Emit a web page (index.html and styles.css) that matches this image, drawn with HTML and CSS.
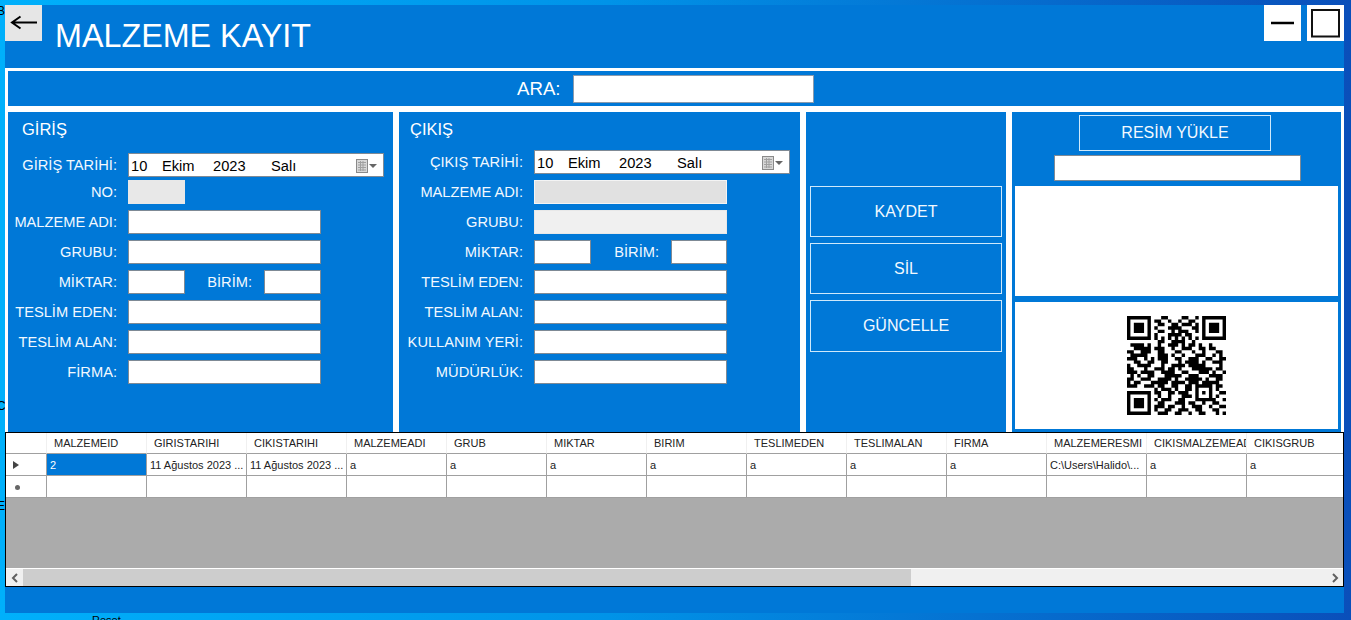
FILE: index.html
```html
<!DOCTYPE html>
<html lang="tr">
<head>
  <meta charset="UTF-8" />
  <meta name="viewport" content="width=device-width, initial-scale=1.0" />
  <title>Malzeme Kayit</title>
  <link rel="stylesheet" href="styles.css">
</head>
<body>
  <!-- bits of the window behind this one -->
  <span class="behind behind-b">B</span>
  <span class="behind behind-c">C</span>
  <span class="behind behind-e">E</span>
  <span class="behind behind-reset">Reset</span>

  <div class="window">
    <div class="header">
      <button class="icon-btn back-btn" aria-label="Geri">
        <svg width="37" height="36" viewBox="0 0 37 36"><path d="M32 17.5H6.500M15.500 11.500L7 17.500L15.500 23.500" fill="none" stroke="#000" stroke-width="2"/></svg>
      </button>
      <h1 class="title">MALZEME KAYIT</h1>
      <div class="window-btns">
        <button class="icon-btn" aria-label="Simge durumuna küçült">
          <svg width="37" height="36" viewBox="0 0 37 36"><path d="M7 18H30" stroke="#000" stroke-width="2.500"/></svg>
        </button>
        <button class="icon-btn" aria-label="Ekranı kapla">
          <svg width="37" height="36" viewBox="0 0 37 36"><rect x="5" y="5" width="27" height="26.500" fill="#fff" stroke="#111" stroke-width="2"/></svg>
        </button>
      </div>
    </div>

    <div class="content">
      <div class="search-bar">
        <label class="search-label">ARA:</label>
        <input class="search-input" type="text" />
      </div>

      <div class="panels">
        <section class="panel panel-giris">
          <h2 class="panel-title">GİRİŞ</h2>
          <div class="rows">
            <div class="row row-tight">
              <label>GİRİŞ TARİHİ:</label>
              <div class="date-box">
                <span class="d-day">10</span><span class="d-month">Ekim</span><span class="d-year">2023</span><span class="d-name">Salı</span>
                <svg class="cal-icon" width="22" height="14" viewBox="0 0 22 14"><rect x=".5" y=".5" width="11" height="13" fill="#d8d8d8" stroke="#8a8a8a"/><path d="M2 3.500h8M2 6h8M2 8.500h8M2 11h8M4.500 2v10M7 2v10" stroke="#a0a0a0"/><path d="M13 5h8l-4 4z" fill="#666"/></svg>
              </div>
            </div>
            <div class="row">
              <label>NO:</label>
              <input class="field field-small field-off" type="text" disabled />
            </div>
            <div class="row"><label>MALZEME ADI:</label><input class="field" type="text" /></div>
            <div class="row"><label>GRUBU:</label><input class="field" type="text" /></div>
            <div class="row">
              <label>MİKTAR:</label>
              <input class="field field-small" type="text" />
              <label class="unit-label">BİRİM:</label>
              <input class="field field-small" type="text" />
            </div>
            <div class="row"><label>TESLİM EDEN:</label><input class="field" type="text" /></div>
            <div class="row"><label>TESLİM ALAN:</label><input class="field" type="text" /></div>
            <div class="row"><label>FİRMA:</label><input class="field" type="text" /></div>
          </div>
        </section>

        <section class="panel panel-cikis">
          <h2 class="panel-title">ÇIKIŞ</h2>
          <div class="rows">
            <div class="row">
              <label>ÇIKIŞ TARİHİ:</label>
              <div class="date-box">
                <span class="d-day">10</span><span class="d-month">Ekim</span><span class="d-year">2023</span><span class="d-name">Salı</span>
                <svg class="cal-icon" width="22" height="14" viewBox="0 0 22 14"><rect x=".5" y=".5" width="11" height="13" fill="#d8d8d8" stroke="#8a8a8a"/><path d="M2 3.500h8M2 6h8M2 8.500h8M2 11h8M4.500 2v10M7 2v10" stroke="#a0a0a0"/><path d="M13 5h8l-4 4z" fill="#666"/></svg>
              </div>
            </div>
            <div class="row"><label>MALZEME ADI:</label><input class="field field-dark" type="text" disabled /></div>
            <div class="row"><label>GRUBU:</label><input class="field field-off" type="text" disabled /></div>
            <div class="row">
              <label>MİKTAR:</label>
              <input class="field field-small" type="text" />
              <label class="unit-label">BİRİM:</label>
              <input class="field field-small" type="text" />
            </div>
            <div class="row"><label>TESLİM EDEN:</label><input class="field" type="text" /></div>
            <div class="row"><label>TESLİM ALAN:</label><input class="field" type="text" /></div>
            <div class="row"><label>KULLANIM YERİ:</label><input class="field" type="text" /></div>
            <div class="row"><label>MÜDÜRLÜK:</label><input class="field" type="text" /></div>
          </div>
        </section>

        <section class="panel panel-actions">
          <button class="action-btn">KAYDET</button>
          <button class="action-btn">SİL</button>
          <button class="action-btn action-btn-last">GÜNCELLE</button>
        </section>

        <section class="panel panel-image">
          <button class="upload-btn">RESİM YÜKLE</button>
          <input class="path-input" type="text" />
          <div class="picture-box"></div>
          <div class="qr-box">
            <svg width="99" height="99" viewBox="0 0 29 29" shape-rendering="geometricPrecision">
              <path fill="none" stroke="#000" d="M0 .5h7M10 .5h2M16 .5h2M20 .5h1M22 .5h7M0 1.500h1M6 1.500h1M8 1.500h2M12 1.500h1M15 1.500h1M18 1.500h2M22 1.500h1M28 1.500h1M0 2.500h1M2 2.500h3M6 2.500h1M9 2.500h2M13 2.500h2M16 2.500h3M20 2.500h1M22 2.500h1M24 2.500h3M28 2.500h1M0 3.500h1M2 3.500h3M6 3.500h1M8 3.500h1M12 3.500h3M15 3.500h1M19 3.500h2M22 3.500h1M24 3.500h3M28 3.500h1M0 4.500h1M2 4.500h3M6 4.500h1M9 4.500h2M13 4.500h1M15 4.500h3M20 4.500h1M22 4.500h1M24 4.500h3M28 4.500h1M0 5.500h1M6 5.500h1M8 5.500h1M12 5.500h4M17 5.500h2M22 5.500h1M28 5.500h1M0 6.500h7M8 6.500h1M10 6.500h1M12 6.500h1M14 6.500h1M16 6.500h1M18 6.500h1M20 6.500h1M22 6.500h7M9 7.500h2M13 7.500h4M19 7.500h1M1 8.500h4M6 8.500h1M9 8.500h1M12 8.500h3M16 8.500h1M18 8.500h2M21 8.500h1M24 8.500h1M2 9.500h5M8 9.500h3M13 9.500h1M16 9.500h3M21 9.500h2M24 9.500h2M0 10.500h2M4 10.500h3M9 10.500h2M14 10.500h2M19 10.500h1M22 10.500h1M26 10.500h2M1 11.500h5M9 11.500h3M13 11.500h1M16 11.500h1M20 11.500h3M25 11.500h1M27 11.500h1M0 12.500h3M5 12.500h1M7 12.500h1M9 12.500h3M14 12.500h2M18 12.500h3M23 12.500h2M27 12.500h2M2 13.500h2M6 13.500h2M10 13.500h2M15 13.500h1M17 13.500h4M22 13.500h1M25 13.500h3M0 14.500h1M3 14.500h4M10 14.500h1M13 14.500h4M18 14.500h5M27 14.500h1M0 15.500h2M5 15.500h1M8 15.500h3M12 15.500h2M15 15.500h1M19 15.500h6M26 15.500h2M0 16.500h3M4 16.500h4M10 16.500h4M16 16.500h2M21 16.500h3M25 16.500h1M28 16.500h1M1 17.500h1M3 17.500h1M6 17.500h2M11 17.500h5M18 17.500h3M24 17.500h4M0 18.500h2M4 18.500h3M9 18.500h4M14 18.500h1M17 18.500h5M23 18.500h1M26 18.500h2M0 19.500h1M2 19.500h2M7 19.500h5M13 19.500h4M18 19.500h3M22 19.500h5M0 20.500h3M5 20.500h3M9 20.500h2M13 20.500h2M17 20.500h2M20 20.500h5M26 20.500h2M8 21.500h1M10 21.500h3M14 21.500h1M17 21.500h2M20 21.500h1M24 21.500h1M26 21.500h1M0 22.500h7M8 22.500h2M12 22.500h2M15 22.500h3M20 22.500h1M22 22.500h1M24 22.500h1M27 22.500h2M0 23.500h1M6 23.500h1M9 23.500h1M12 23.500h1M16 23.500h3M20 23.500h1M24 23.500h1M26 23.500h1M0 24.500h1M2 24.500h3M6 24.500h1M8 24.500h1M10 24.500h3M15 24.500h2M20 24.500h5M25 24.500h1M28 24.500h1M0 25.500h1M2 25.500h3M6 25.500h1M9 25.500h2M14 25.500h3M18 25.500h2M22 25.500h1M25 25.500h2M0 26.500h1M2 26.500h3M6 26.500h1M8 26.500h3M12 26.500h2M16 26.500h1M19 26.500h3M24 26.500h1M27 26.500h2M0 27.500h1M6 27.500h1M8 27.500h1M11 27.500h2M15 27.500h3M20 27.500h2M25 27.500h2M0 28.500h7M9 28.500h3M14 28.500h2M18 28.500h1M21 28.500h2M26 28.500h1M28 28.500h1"/>
            </svg>
          </div>
        </section>
      </div>
    </div>

    <div class="grid-view">
      <div class="grid-body">
        <table class="grid">
          <thead>
            <tr>
              <th class="row-head"></th>
              <th>MALZEMEID</th><th>GIRISTARIHI</th><th>CIKISTARIHI</th><th>MALZEMEADI</th><th>GRUB</th><th>MIKTAR</th><th>BIRIM</th><th>TESLIMEDEN</th><th>TESLIMALAN</th><th>FIRMA</th><th>MALZEMERESMI</th><th>CIKISMALZEMEADI</th><th>CIKISGRUB</th>
            </tr>
          </thead>
          <tbody>
            <tr>
              <td class="row-head"><span class="row-arrow"></span></td>
              <td class="cell-selected">2</td><td>11 Ağustos 2023 ...</td><td>11 Ağustos 2023 ...</td><td>a</td><td>a</td><td>a</td><td>a</td><td>a</td><td>a</td><td>a</td><td>C:\Users\Halido\...</td><td>a</td><td>a</td>
            </tr>
            <tr>
              <td class="row-head"><span class="row-star"></span></td>
              <td></td><td></td><td></td><td></td><td></td><td></td><td></td><td></td><td></td><td></td><td></td><td></td><td></td>
            </tr>
          </tbody>
        </table>
      </div>
      <div class="scrollbar">
        <span class="scroll-arrow">
          <svg width="8" height="10" viewBox="0 0 8 10"><path d="M6 1L2 5l4 4" fill="none" stroke="#606060" stroke-width="2"/></svg>
        </span>
        <span class="scroll-thumb"></span>
        <span class="scroll-arrow scroll-arrow-right">
          <svg width="8" height="10" viewBox="0 0 8 10"><path d="M2 1l4 4-4 4" fill="none" stroke="#606060" stroke-width="2"/></svg>
        </span>
      </div>
    </div>
  </div>
</body>
</html>
```

FILE: styles.css
```css
* { box-sizing: border-box; }
html, body { height: 100%; }
body { position: relative; margin: 0; height: 620px; overflow: hidden; font-family: "Liberation Sans", Arial, sans-serif; background: linear-gradient(90deg, #00b0fb 0%, #0093e8 45%, #0a4fba 100%); }

.behind { position: absolute; font-size: 12px; color: #000; line-height: 12px; }
.behind-b { left: -3px; top: 5px; }
.behind-c { left: -3px; top: 400px; }
.behind-e { left: -3px; top: 500px; }
.behind-reset { left: 92px; top: 614px; font-size: 11px; }

.window { position: relative; width: 1339px; height: 608px; margin: 5px 0 0 5px; background: #0078d7; }

.header { display: flex; align-items: flex-start; height: 63px; }
.icon-btn { display: block; width: 37px; height: 36px; padding: 0; border: none; background: #fff; }
.back-btn { background: #e6e6e6; }
.title { margin: 13px 0 0 13px; color: #fff; font-size: 32.3px; font-weight: normal; line-height: 37px; }
.window-btns { display: flex; gap: 6px; margin-left: auto; }

.content { padding: 3px 0 0 3px; background: #fff; }
.search-bar { display: flex; align-items: center; height: 35px; margin-bottom: 6px; padding-left: 509px; background: #0078d7; }
.search-label { margin-right: 12px; color: #fff; font-size: 18.67px; }
.search-input { width: 241px; height: 28px; border: 1px solid #8a9bad; background: #fff; }

.panels { display: flex; gap: 6px; height: 320px; margin-right: 3px; }
.panel { background: #0078d7; }
.panel-giris { width: 385px; }
.panel-cikis { width: 401px; }
.panel-actions { display: flex; flex-direction: column; gap: 6px; width: 200px; padding: 74px 4px 0; }
.panel-image { display: flex; flex-direction: column; align-items: center; width: 329px; padding: 3px 3px 3px; }

.panel-title { margin: 0; padding-left: 14px; color: #fff; font-size: 16.5px; font-weight: normal; line-height: 34px; }
.panel-cikis .panel-title { padding-left: 11px; }

.rows { display: flex; flex-direction: column; gap: 6px; padding-top: 7px; }
.panel-cikis .rows { padding-top: 4px; }
.row { display: flex; align-items: center; height: 24px; }
.row-tight { margin-bottom: -3px; }
.row label { flex: none; width: 109px; margin-right: 11px; color: #f2f9ff; font-size: 14.67px; text-align: right; white-space: nowrap; }
.panel-cikis .row label { width: 124px; }
.row .unit-label { width: 67px; margin-right: 12px; }
.panel-cikis .row .unit-label { width: 68px; margin-right: 12px; }
.panel-cikis .unit-label + .field-small { width: 56px; }

.field { width: 193px; height: 24px; border: 1px solid #7f8a95; background: #fff; }
.field-small { width: 57px; }
.field-off { border-color: #e8e8e8; background: #f0f0f0; }
.panel-giris .field-off { background: #e8e8e8; }
.field-dark { border-color: #f4f4f4; background: #e1e1e1; }

.date-box { display: flex; align-items: center; position: relative; width: 256px; height: 24px; padding: 2px 0 0 2px; border: 1px solid #7f8a95; background: #fff; color: #000; font-size: 14.67px; }
.d-day { width: 31px; }
.d-month { width: 51px; }
.d-year { width: 58px; }
.cal-icon { position: absolute; right: 5px; top: 5px; }

.action-btn { height: 51px; border: 1px solid #cfe9fb; background: #0078d7; color: #f2f9ff; font-family: inherit; font-size: 16px; }
.action-btn-last { height: 52px; }

.upload-btn { width: 192px; height: 36px; margin-right: 3px; border: 1px solid #cfe9fb; background: #0078d7; color: #f2f9ff; font-family: inherit; font-size: 16px; }
.path-input { width: 247px; height: 26px; margin: 4px 0 5px 1px; border: 1px solid #7f8a95; background: #fff; }
.picture-box { width: 323px; height: 110px; margin-bottom: 6px; background: #fff; }
.qr-box { display: flex; align-items: center; justify-content: center; width: 323px; height: 127px; background: #fff; }

.grid-view { display: flex; flex-direction: column; height: 155px; border: 1px solid #000; background: #ababab; }
.grid-body { flex: 1; overflow: hidden; }
.grid { width: 1341px; table-layout: fixed; border-collapse: separate; border-spacing: 0; background: #fff; color: #222; font-size: 11px; }
.grid th, .grid td { width: 100px; overflow: hidden; white-space: nowrap; text-align: left; font-weight: normal; }
.grid th { height: 21px; padding: 0 0 0 7px; border-right: 1px solid #f0f0f0; border-bottom: 1px solid #a0a0a0; }
.grid td { height: 22px; padding: 0 0 0 3px; border-right: 1px solid #a0a0a0; border-bottom: 1px solid #a0a0a0; }
.grid .row-head { width: 41px; border-right: 1px solid #a0a0a0; }
.grid thead .row-head { border-right-color: #f0f0f0; }
.grid .cell-selected { background: #0078d7; color: #fff; }
.row-arrow { display: block; width: 0; height: 0; margin-left: 4px; border-top: 4px solid transparent; border-bottom: 4px solid transparent; border-left: 6px solid #444; }
.row-star { display: block; width: 5px; height: 5px; margin: 1px 0 0 6px; border-radius: 50%; background: #666; }

.scrollbar { display: flex; flex: none; height: 18px; border-top: 1px solid #fff; background: #f0f0f0; }
.scroll-arrow { display: flex; align-items: center; justify-content: center; flex: none; width: 17px; }
.scroll-arrow-right { margin-left: auto; }
.scroll-thumb { width: 888px; background: #cdcdcd; }
```
